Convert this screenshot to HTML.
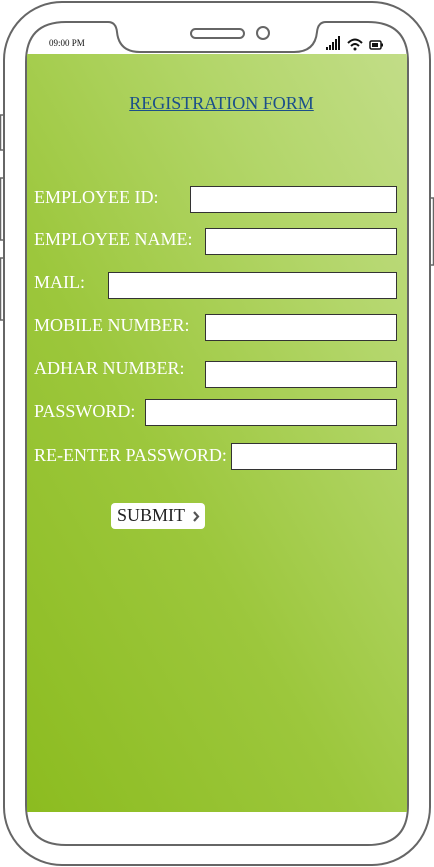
<!DOCTYPE html>
<html><head><meta charset="utf-8"><style>
html,body{margin:0;padding:0;width:434px;height:867px;overflow:hidden;background:#fff;font-family:"Liberation Serif",serif;}
.abs{position:absolute}
.screen{position:absolute;left:27px;top:54px;width:380px;height:758px;background:linear-gradient(60deg,#8cbc20 0%,#9cc73c 40%,#b3d66a 75%,#c2dd88 100%);}
.lbl{position:absolute;color:#fff;font-size:18px;line-height:20px;}
.inp{position:absolute;background:#fff;border:1px solid #333;box-sizing:border-box;height:27px;}
</style></head><body>
<svg class="abs" style="left:0;top:0" width="434" height="867">
<rect x="0.5" y="115" width="5" height="35" fill="#fff" stroke="#666" stroke-width="1.5"/>
<rect x="0.5" y="178" width="5" height="62" fill="#fff" stroke="#666" stroke-width="1.5"/>
<rect x="0.5" y="258" width="5" height="62" fill="#fff" stroke="#666" stroke-width="1.5"/>
<rect x="428.5" y="198" width="5" height="67" fill="#fff" stroke="#666" stroke-width="1.5"/>
<rect x="4" y="2" width="426" height="863" rx="58" fill="#fff" stroke="#666" stroke-width="2"/>
<path d="M66 22 H108 Q116 22 117 32 Q119 52 140 52 H294 Q315 52 317 32 Q318 22 326 22 H368 Q408 22 408 62 V805 Q408 845 368 845 H66 Q26 845 26 805 V62 Q26 22 66 22 Z" fill="#fff" stroke="#666" stroke-width="2"/>
<rect x="191" y="29" width="53" height="9" rx="4.5" fill="none" stroke="#666" stroke-width="2"/>
<circle cx="263" cy="33" r="6" fill="none" stroke="#666" stroke-width="2"/>
<rect x="326" y="47" width="2" height="3" fill="#111"/>
<rect x="329" y="45" width="2" height="5" fill="#111"/>
<rect x="332" y="42" width="2" height="8" fill="#111"/>
<rect x="335" y="39" width="2" height="11" fill="#111"/>
<rect x="338" y="36" width="2" height="14" fill="#111"/>
<path d="M348 43 Q355 36 362 43" fill="none" stroke="#111" stroke-width="2"/>
<path d="M351 46 Q355 42 359 46" fill="none" stroke="#111" stroke-width="2"/>
<circle cx="355" cy="49" r="1.5" fill="#111"/>
<rect x="370" y="41" width="11" height="8" rx="1.5" fill="none" stroke="#111" stroke-width="1.5"/>
<rect x="372" y="43" width="6" height="4" fill="#111"/>
<rect x="381.5" y="43.5" width="1.5" height="3" fill="#111"/>
</svg>
<div class="abs" style="left:49px;top:38px;font-size:9px;color:#111">09:00 PM</div>
<div class="screen"></div>
<div class="abs" style="left:0;width:443px;top:93px;text-align:center;font-size:18px;color:#1b4f8a;text-decoration:underline">REGISTRATION FORM</div>
<div class="lbl" style="left:34px;top:187px">EMPLOYEE ID:</div><div class="inp" style="left:190px;top:186px;width:207px"></div>
<div class="lbl" style="left:34px;top:229px">EMPLOYEE NAME:</div><div class="inp" style="left:205px;top:228px;width:192px"></div>
<div class="lbl" style="left:34px;top:272px">MAIL:</div><div class="inp" style="left:108px;top:272px;width:289px"></div>
<div class="lbl" style="left:34px;top:315px">MOBILE NUMBER:</div><div class="inp" style="left:205px;top:314px;width:192px"></div>
<div class="lbl" style="left:34px;top:358px">ADHAR NUMBER:</div><div class="inp" style="left:205px;top:361px;width:192px"></div>
<div class="lbl" style="left:34px;top:401px">PASSWORD:</div><div class="inp" style="left:145px;top:399px;width:252px"></div>
<div class="lbl" style="left:34px;top:445px">RE-ENTER PASSWORD:</div><div class="inp" style="left:231px;top:443px;width:166px"></div>
<div class="abs" style="left:111px;top:503px;width:94px;height:26px;background:#fff;border-radius:4px;font-size:18px;line-height:24px;color:#222">
<span style="position:absolute;left:6px">SUBMIT</span>
<svg style="position:absolute;left:81px;top:8px" width="8" height="11"><path d="M2 1 L6 5.5 L2 10" fill="none" stroke="#555" stroke-width="2.2"/></svg>
</div>
</body></html>
